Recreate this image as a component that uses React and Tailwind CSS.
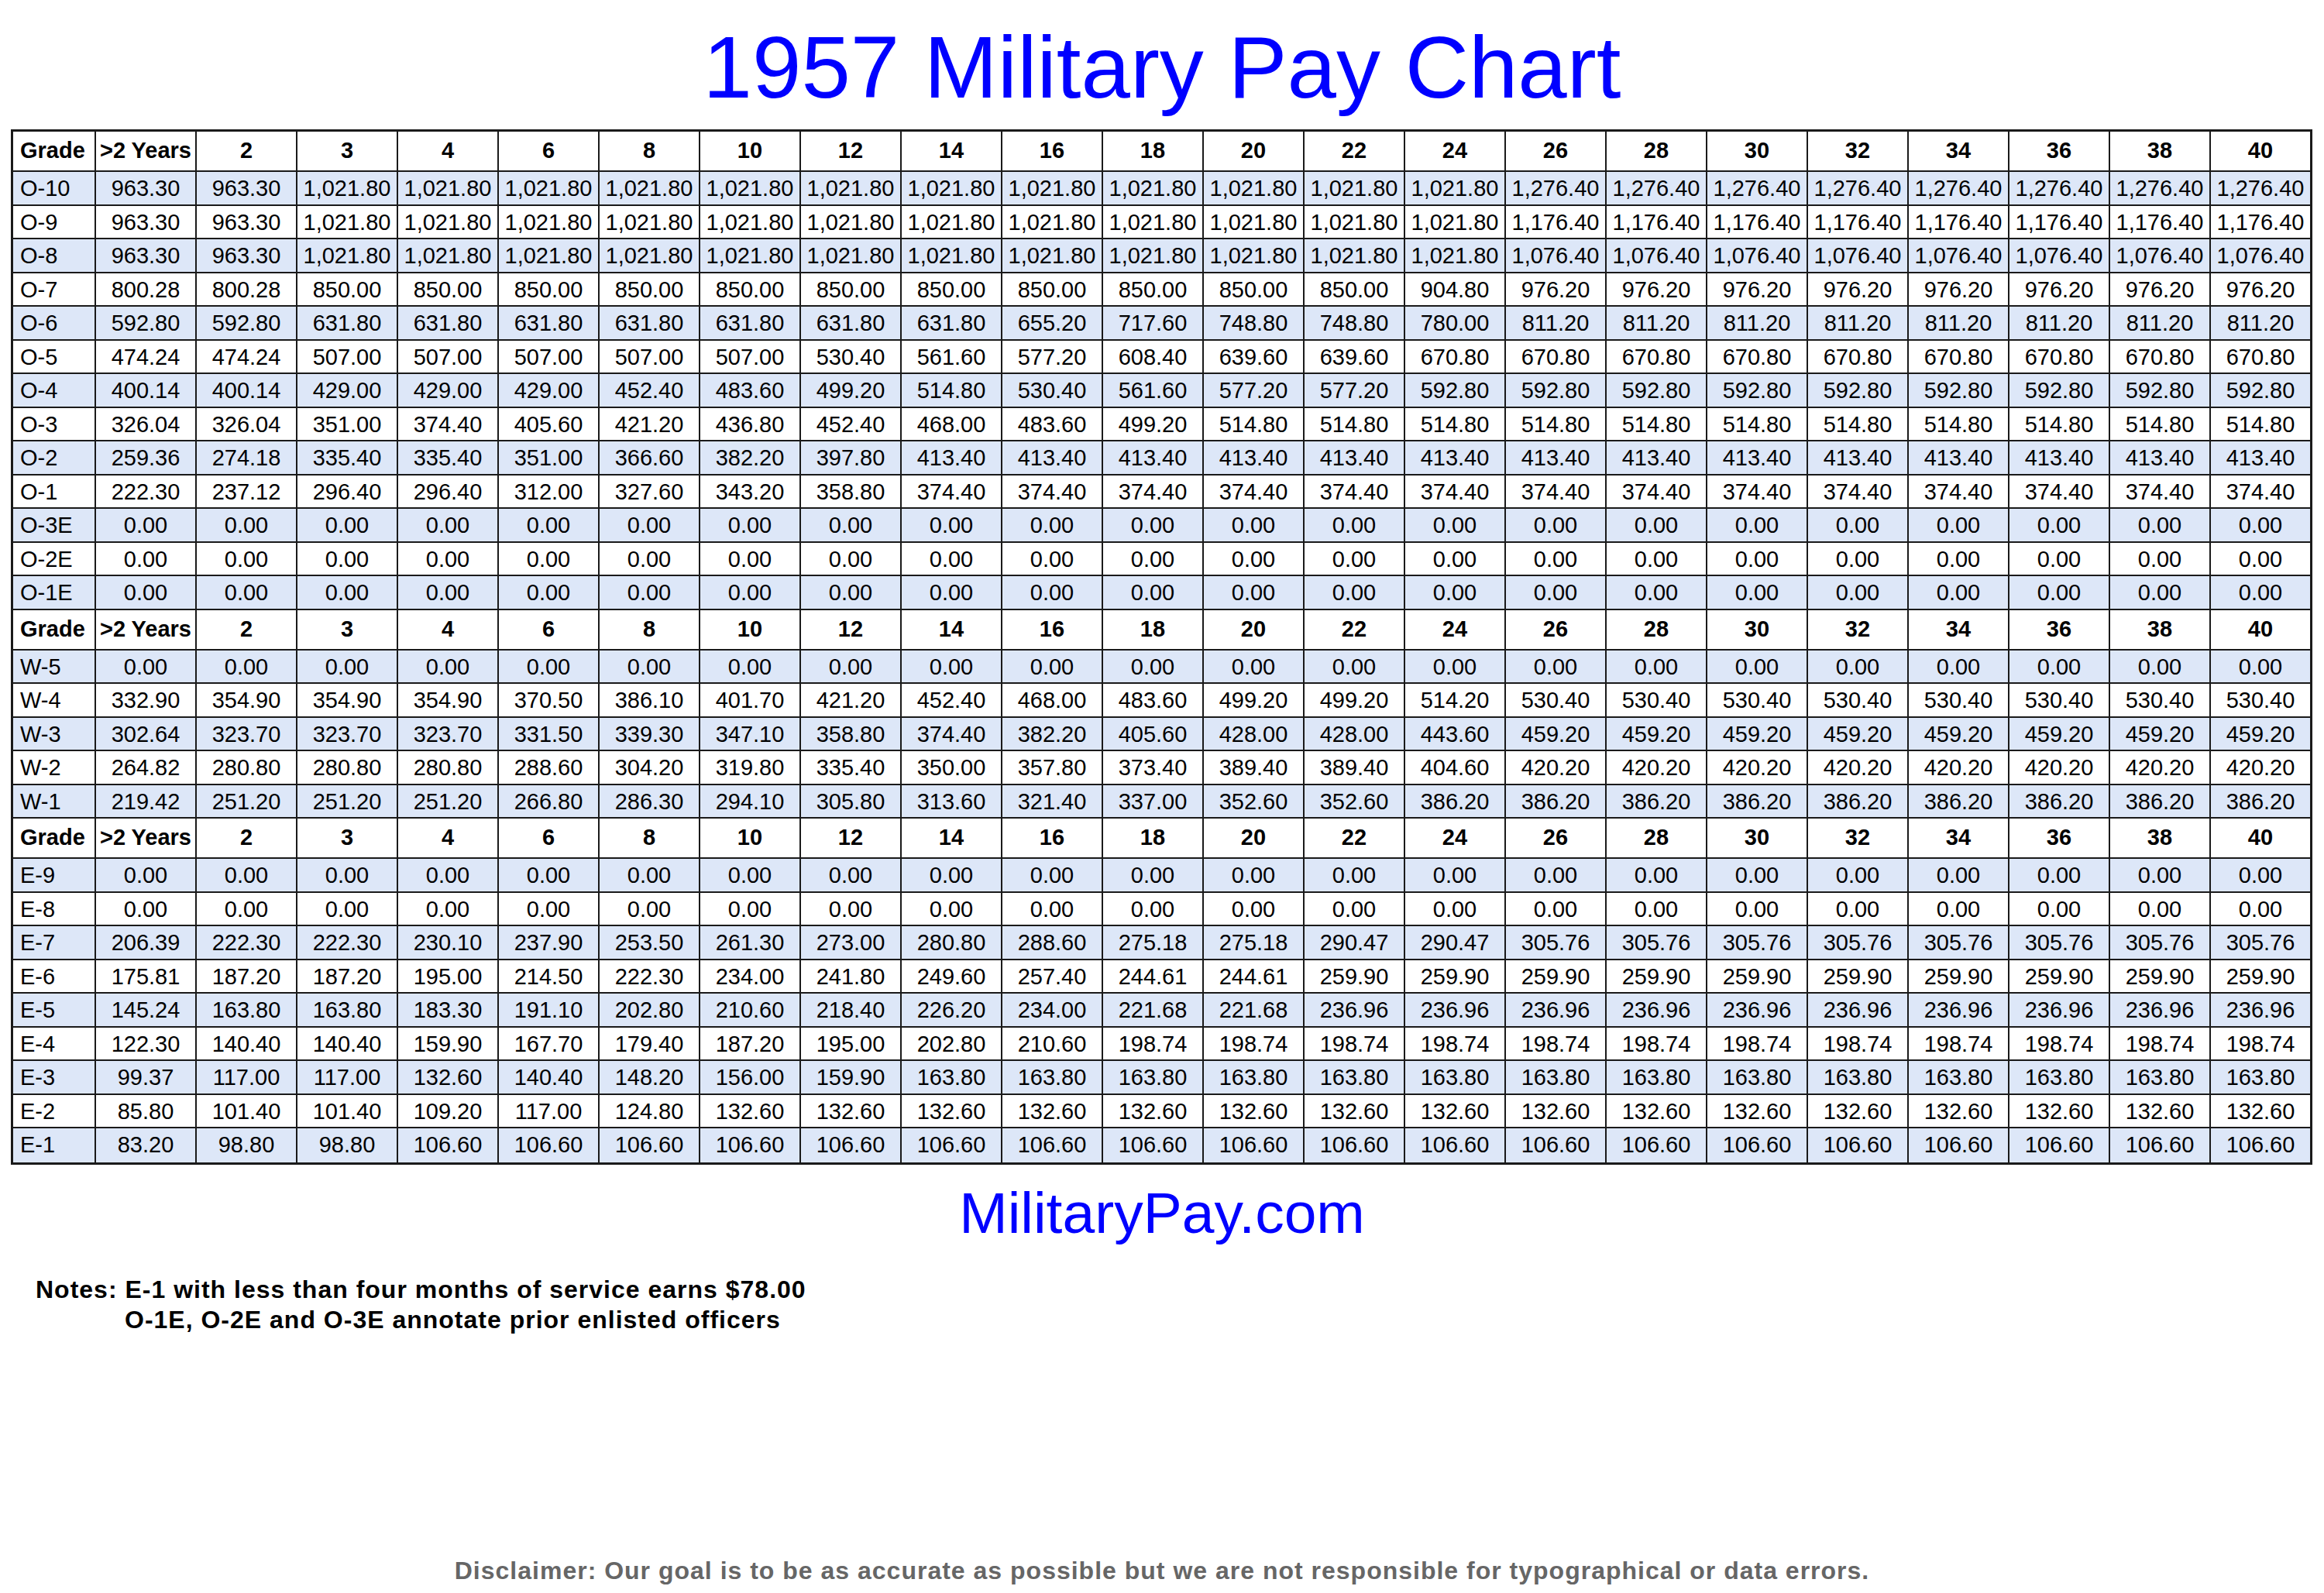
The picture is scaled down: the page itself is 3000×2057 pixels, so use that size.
import React from 'react';

const YEARS = ['2', '3', '4', '6', '8', '10', '12', '14', '16', '18', '20', '22', '24', '26', '28', '30', '32', '34', '36', '38', '40'];

// repeat a value n times
const rep = (v, n) => Array(n).fill(v);

// pad a row out to 22 values by repeating the last one
const fill = (vals) => {
  const out = [...vals];
  while (out.length < 22) out.push(vals[vals.length - 1]);
  return out;
};

const zeros = fill(['0.00']);

const officers = [
  ['O-10', fill([...rep('963.30', 2), ...rep('1,021.80', 12), '1,276.40'])],
  ['O-9', fill([...rep('963.30', 2), ...rep('1,021.80', 12), '1,176.40'])],
  ['O-8', fill([...rep('963.30', 2), ...rep('1,021.80', 12), '1,076.40'])],
  ['O-7', fill([...rep('800.28', 2), ...rep('850.00', 11), '904.80', '976.20'])],
  ['O-6', fill([...rep('592.80', 2), ...rep('631.80', 7), '655.20', '717.60', '748.80', '748.80', '780.00', '811.20'])],
  ['O-5', fill([...rep('474.24', 2), ...rep('507.00', 5), '530.40', '561.60', '577.20', '608.40', '639.60', '639.60', '670.80'])],
  ['O-4', fill([...rep('400.14', 2), ...rep('429.00', 3), '452.40', '483.60', '499.20', '514.80', '530.40', '561.60', '577.20', '577.20', '592.80'])],
  ['O-3', fill([...rep('326.04', 2), '351.00', '374.40', '405.60', '421.20', '436.80', '452.40', '468.00', '483.60', '499.20', '514.80'])],
  ['O-2', fill(['259.36', '274.18', '335.40', '335.40', '351.00', '366.60', '382.20', '397.80', '413.40'])],
  ['O-1', fill(['222.30', '237.12', '296.40', '296.40', '312.00', '327.60', '343.20', '358.80', '374.40'])],
  ['O-3E', zeros],
  ['O-2E', zeros],
  ['O-1E', zeros],
];

const warrants = [
  ['W-5', zeros],
  ['W-4', fill(['332.90', '354.90', '354.90', '354.90', '370.50', '386.10', '401.70', '421.20', '452.40', '468.00', '483.60', '499.20', '499.20', '514.20', '530.40'])],
  ['W-3', fill(['302.64', '323.70', '323.70', '323.70', '331.50', '339.30', '347.10', '358.80', '374.40', '382.20', '405.60', '428.00', '428.00', '443.60', '459.20'])],
  ['W-2', fill(['264.82', '280.80', '280.80', '280.80', '288.60', '304.20', '319.80', '335.40', '350.00', '357.80', '373.40', '389.40', '389.40', '404.60', '420.20'])],
  ['W-1', fill(['219.42', '251.20', '251.20', '251.20', '266.80', '286.30', '294.10', '305.80', '313.60', '321.40', '337.00', '352.60', '352.60', '386.20'])],
];

const enlisted = [
  ['E-9', zeros],
  ['E-8', zeros],
  ['E-7', fill(['206.39', '222.30', '222.30', '230.10', '237.90', '253.50', '261.30', '273.00', '280.80', '288.60', '275.18', '275.18', '290.47', '290.47', '305.76'])],
  ['E-6', fill(['175.81', '187.20', '187.20', '195.00', '214.50', '222.30', '234.00', '241.80', '249.60', '257.40', '244.61', '244.61', '259.90'])],
  ['E-5', fill(['145.24', '163.80', '163.80', '183.30', '191.10', '202.80', '210.60', '218.40', '226.20', '234.00', '221.68', '221.68', '236.96'])],
  ['E-4', fill(['122.30', '140.40', '140.40', '159.90', '167.70', '179.40', '187.20', '195.00', '202.80', '210.60', '198.74'])],
  ['E-3', fill(['99.37', '117.00', '117.00', '132.60', '140.40', '148.20', '156.00', '159.90', '163.80'])],
  ['E-2', fill(['85.80', '101.40', '101.40', '109.20', '117.00', '124.80', '132.60'])],
  ['E-1', fill(['83.20', '98.80', '98.80', '106.60'])],
];

function Row({ cells, head, shaded, last }) {
  return (
    <div
      className={`grid grid-cols-[107px_repeat(21,130px)_128px] border-[#1a1a1a] ${last ? '' : 'border-b-2'} ${head ? 'h-[52px] font-bold' : 'h-[43.5px]'} ${shaded ? 'bg-[#dde7f8]' : 'bg-white'}`}
    >
      {cells.map((c, i) => (
        <div
          key={i}
          className={`flex items-center whitespace-nowrap border-[#1a1a1a] ${i < cells.length - 1 ? 'border-r-2' : ''} ${i === 0 ? 'justify-start pl-[9px]' : 'justify-center'}`}
        >
          {c}
        </div>
      ))}
    </div>
  );
}

function Section({ rows, isLast }) {
  return (
    <>
      <Row head cells={['Grade', '>2 Years', ...YEARS]} />
      {rows.map(([grade, vals], i) => (
        <Row
          key={grade}
          cells={[grade, ...vals]}
          shaded={i % 2 === 0}
          last={isLast && i === rows.length - 1}
        />
      ))}
    </>
  );
}

export default function App() {
  return (
    <div className="w-[3000px] bg-white text-black font-['Liberation_Sans',Arial,sans-serif]">
      <h1 className="pt-[30px] text-center text-[114px] leading-[114px] font-normal text-[#0000ff]">
        1957 Military Pay Chart
      </h1>

      <div className="ml-[14px] mt-[23px] w-fit border-[3px] border-[#1a1a1a] text-[29px]">
        <Section rows={officers} />
        <Section rows={warrants} />
        <Section rows={enlisted} isLast />
      </div>

      <div className="mt-[25px] text-center text-[75px] leading-[75px] text-[#0000ff]">
        MilitaryPay.com
      </div>

      <div className="mt-[42px] text-[32px] leading-[39px] font-bold tracking-[1px]">
        <div className="pl-[46px]">Notes: E-1 with less than four months of service earns $78.00</div>
        <div className="pl-[161px]">O-1E, O-2E and O-3E annotate prior enlisted officers</div>
      </div>

      <div className="mt-[285px] text-center text-[32px] leading-[39px] font-bold tracking-[1px] text-[#666666]">
        Disclaimer: Our goal is to be as accurate as possible but we are not responsible for typographical or data errors.
      </div>
    </div>
  );
}
